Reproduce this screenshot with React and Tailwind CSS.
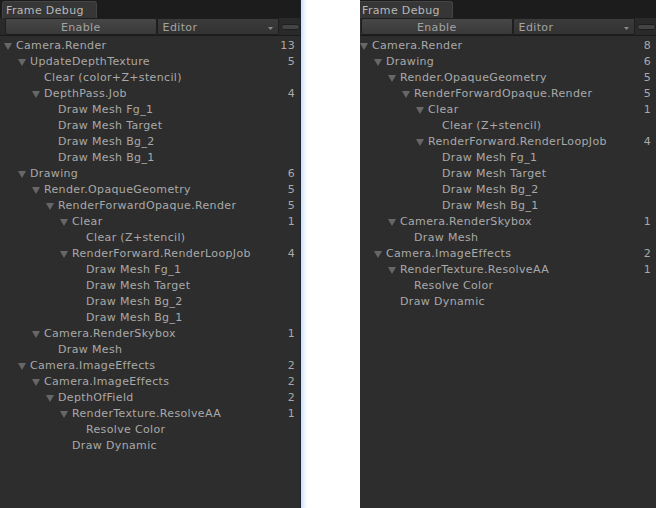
const leftRows = [
  [0, 'Camera.Render', '13', true],
  [1, 'UpdateDepthTexture', '5', true],
  [2, 'Clear (color+Z+stencil)', '', false],
  [2, 'DepthPass.Job', '4', true],
  [3, 'Draw Mesh Fg_1', '', false],
  [3, 'Draw Mesh Target', '', false],
  [3, 'Draw Mesh Bg_2', '', false],
  [3, 'Draw Mesh Bg_1', '', false],
  [1, 'Drawing', '6', true],
  [2, 'Render.OpaqueGeometry', '5', true],
  [3, 'RenderForwardOpaque.Render', '5', true],
  [4, 'Clear', '1', true],
  [5, 'Clear (Z+stencil)', '', false],
  [4, 'RenderForward.RenderLoopJob', '4', true],
  [5, 'Draw Mesh Fg_1', '', false],
  [5, 'Draw Mesh Target', '', false],
  [5, 'Draw Mesh Bg_2', '', false],
  [5, 'Draw Mesh Bg_1', '', false],
  [2, 'Camera.RenderSkybox', '1', true],
  [3, 'Draw Mesh', '', false],
  [1, 'Camera.ImageEffects', '2', true],
  [2, 'Camera.ImageEffects', '2', true],
  [3, 'DepthOfField', '2', true],
  [4, 'RenderTexture.ResolveAA', '1', true],
  [5, 'Resolve Color', '', false],
  [4, 'Draw Dynamic', '', false],
]

const rightRows = [
  [0, 'Camera.Render', '8', true],
  [1, 'Drawing', '6', true],
  [2, 'Render.OpaqueGeometry', '5', true],
  [3, 'RenderForwardOpaque.Render', '5', true],
  [4, 'Clear', '1', true],
  [5, 'Clear (Z+stencil)', '', false],
  [4, 'RenderForward.RenderLoopJob', '4', true],
  [5, 'Draw Mesh Fg_1', '', false],
  [5, 'Draw Mesh Target', '', false],
  [5, 'Draw Mesh Bg_2', '', false],
  [5, 'Draw Mesh Bg_1', '', false],
  [2, 'Camera.RenderSkybox', '1', true],
  [3, 'Draw Mesh', '', false],
  [1, 'Camera.ImageEffects', '2', true],
  [2, 'RenderTexture.ResolveAA', '1', true],
  [3, 'Resolve Color', '', false],
  [2, 'Draw Dynamic', '', false],
]

const font = { fontFamily: '"DejaVu Sans", Verdana, sans-serif' }

function Arrow() {
  return (
    <svg width="8" height="7" viewBox="0 0 8 7" className="block">
      <path d="M0 0 L8 0 L4 7 Z" fill="#676767" />
    </svg>
  )
}

function Row({ level, label, count, open }) {
  return (
    <div className="flex h-4 items-center pr-[5px]">
      <div className="shrink-0" style={{ width: 16 + level * 14 }}>
        {open && (
          <div className="flex justify-end pr-[4px] pt-px">
            <Arrow />
          </div>
        )}
      </div>
      <span className="flex-1 whitespace-nowrap">{label}</span>
      <span>{count}</span>
    </div>
  )
}

function FramePanel({ rows }) {
  return (
    <div className="flex h-full w-[300px] flex-col bg-[#2d2d2d] text-[11px] tracking-[0.35px] text-[#a9a9a9]" style={font}>
      <div className="flex h-[18px] shrink-0 items-end bg-[#1c1c1c] pl-[2px]">
        <div className="flex h-[17px] w-[95px] items-center rounded-t-[3px] border border-b-0 border-[#444] bg-[#363636] pl-[3px] pt-[3px] text-[#b8b8b8]">
          Frame Debug
        </div>
      </div>
      <div className="flex h-[18px] shrink-0 items-center border-b border-[#1a1a1a] bg-[#2a2a2a] pl-[5px]">
        <div className="flex h-[17px] w-[157px] items-center justify-center rounded-[2px] border border-[#1e1e1e] bg-gradient-to-b from-[#474747] to-[#393939] pt-[3px] text-[#a3a3a3]">
          Enable
        </div>
        <div className="flex h-[17px] w-[126px] items-center justify-between border border-[#1e1e1e] bg-gradient-to-b from-[#3a3a3a] to-[#333333] px-[5px] pt-[3px] text-[#a3a3a3]">
          <span>Editor</span>
          <svg width="5" height="3" viewBox="0 0 5 3">
            <path d="M0 0 L5 0 L2.5 3 Z" fill="#8a8a8a" />
          </svg>
        </div>
        <div className="ml-[2px] h-[6px] w-[20px] rounded-full border border-[#1e1e1e] bg-[#444]" />
      </div>
      <div className="pt-[2px]">
        {rows.map(([level, label, count, open], i) => (
          <Row key={i} level={level} label={label} count={count} open={open} />
        ))}
      </div>
    </div>
  )
}

export default function App() {
  return (
    <div className="flex h-[508px] w-[658px] bg-white">
      <div className="flex shrink-0">
        <FramePanel rows={leftRows} />
        <div className="w-px bg-[#1b2430]" />
        <div className="w-[6px] bg-gradient-to-r from-[#cfe0f8] to-white" />
      </div>
      <div className="flex-1" />
      <div className="w-[298px] shrink-0 overflow-hidden">
        <div className="-ml-[4px] h-full">
          <FramePanel rows={rightRows} />
        </div>
      </div>
    </div>
  )
}
